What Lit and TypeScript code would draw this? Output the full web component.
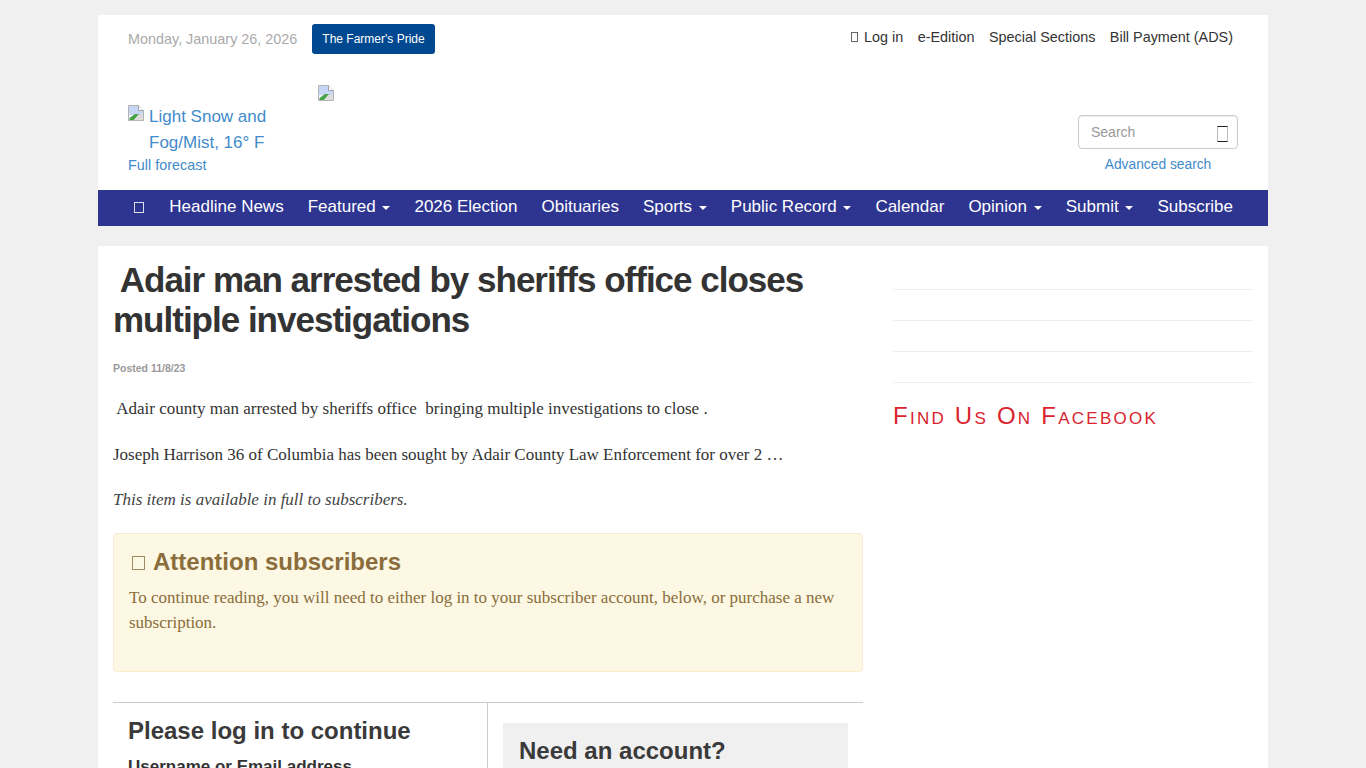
import { LitElement, html, css } from "lit";
import { customElement } from "lit/decorators.js";

const navItems = [
	{ label: "Headline News" },
	{ label: "Featured", caret: true },
	{ label: "2026 Election" },
	{ label: "Obituaries" },
	{ label: "Sports", caret: true },
	{ label: "Public Record", caret: true },
	{ label: "Calendar" },
	{ label: "Opinion", caret: true },
	{ label: "Submit", caret: true },
	{ label: "Subscribe" },
];

// chrome's broken image placeholder
const brokenImage = html`<svg class="broken" width="16" height="16" viewBox="0 0 16 16">
	<path d="M0.5 0.5H10.5L15.5 5.5V15.5H0.5Z" fill="#f4f4f4" stroke="#b4b4b4" />
	<path d="M1 1H10V6H15V10H1Z" fill="#c6d6f4" />
	<path d="M1.5 15V13L7 9H11L6 15Z" fill="#47a447" />
	<path d="M6 15L11 9.5H15V15Z" fill="#dcdcdc" />
	<path d="M10.5 0.5V5.5H15.5" fill="#fff" stroke="#a0a0a0" />
</svg>`;

@customElement("app-root")
export class AppRoot extends LitElement {
	static override styles = css`
		:host {
			display: block;
			height: 768px;
			overflow: hidden;
			background: #f0f0f0;
			font-family: "Liberation Sans", Arial, sans-serif;
			font-size: 14px;
			color: #333;
		}
		a {
			color: #428bca;
			text-decoration: none;
		}
		.page {
			width: 1170px;
			margin: 0 auto;
			padding-top: 15px;
		}
		.tofu {
			display: inline-block;
			box-sizing: border-box;
			border: 1px solid currentColor;
			width: 8px;
			height: 11px;
		}

		.header {
			background: #fff;
			height: 175px;
			display: flex;
			flex-direction: column;
		}
		.top {
			display: flex;
			justify-content: space-between;
			padding: 9px 35px 0 30px;
		}
		.top-left {
			display: flex;
			align-items: center;
			gap: 14.5px;
			height: 30px;
		}
		.date {
			color: #aaa;
			font-size: 14.4px;
		}
		.pride {
			background: #004990;
			color: #fff;
			font-size: 12px;
			line-height: 30px;
			padding: 0 10.5px;
			border-radius: 3px;
		}
		.top-links {
			display: flex;
			gap: 14.5px;
			padding-top: 3px;
			line-height: 20px;
			font-size: 14.4px;
		}
		.top-links a {
			color: #333;
		}
		.top-links .tofu {
			width: 7px;
			height: 10px;
			margin-right: 6px;
			color: #666;
		}
		.masthead {
			display: flex;
			padding: 31px 30px 0;
		}
		.weather {
			width: 190px;
			padding-top: 19px;
		}
		.weather-link {
			display: block;
			font-size: 17px;
			line-height: 26px;
			padding-left: 21px;
			width: 130px;
			position: relative;
		}
		.broken {
			display: block;
		}
		.weather-link .broken {
			position: absolute;
			left: 0;
			top: 1px;
		}
		.forecast {
			display: block;
			font-size: 14.4px;
			line-height: 20px;
			margin-top: -1px;
		}
		.logo {
			flex: 1;
		}
		.search-box {
			width: 160px;
			padding-top: 30px;
			text-align: center;
		}
		.search {
			box-sizing: border-box;
			height: 34px;
			border: 1px solid #ccc;
			border-radius: 4px;
			display: flex;
			align-items: center;
			justify-content: space-between;
			padding: 0 9px 0 12px;
			color: #999;
			box-shadow: inset 0 1px 1px rgba(0, 0, 0, 0.075);
		}
		.search .tofu {
			width: 11px;
			height: 16px;
			margin-top: 4px;
			border-color: #222 #bbb;
		}
		.advanced {
			display: block;
			margin-top: 6px;
			font-size: 13.8px;
			line-height: 20px;
		}

		.nav {
			background: #2e3591;
			height: 36px;
			display: flex;
			justify-content: flex-end;
			align-items: center;
			gap: 24px;
			padding: 0 35px 2px 0;
			box-sizing: border-box;
			color: #fff;
			font-size: 17px;
		}
		.nav .tofu {
			width: 10px;
			height: 11px;
			margin-right: 1px;
			color: #dde;
		}
		.caret {
			display: inline-block;
			width: 0;
			height: 0;
			margin-left: 2px;
			vertical-align: middle;
			border-top: 4px solid #fff;
			border-left: 4px solid transparent;
			border-right: 4px solid transparent;
		}

		.content {
			background: #fff;
			margin-top: 20px;
			display: flex;
			gap: 30px;
			padding: 0 15px;
			height: 600px;
		}
		.article {
			width: 750px;
			flex: none;
		}
		h1 {
			margin: 14px 0 0;
			font-size: 35px;
			line-height: 40px;
			letter-spacing: -1px;
			font-weight: bold;
			color: #333;
		}
		h1 .lead {
			letter-spacing: -3px;
		}
		.posted {
			margin-top: 21px;
			font-size: 10.5px;
			line-height: 14px;
			font-weight: bold;
			color: #999;
		}
		.body p {
			margin: 0 0 20px;
			font-family: "Liberation Serif", "Times New Roman", serif;
			font-size: 17px;
			line-height: 25.5px;
			color: #333;
		}
		.body p .lead {
			letter-spacing: -1px;
		}
		.body em {
			color: #444;
		}
		.body {
			margin-top: 21px;
		}
		.alert {
			box-sizing: border-box;
			height: 139px;
			background: #fcf8e3;
			border: 1px solid #faebcc;
			border-radius: 4px;
			padding: 15px;
			color: #8a6d3b;
		}
		.alert h3 {
			margin: 0 0 10px;
			font-size: 24px;
			line-height: 26px;
		}
		.alert .tofu {
			width: 13px;
			height: 14px;
			margin: 0 8px 0 3px;
			border-color: #a08a60;
		}
		.alert p {
			margin: 0;
			font-family: "Liberation Serif", "Times New Roman", serif;
			font-size: 17px;
			line-height: 25px;
		}
		.login {
			margin-top: 30px;
			border-top: 1px solid #ccc;
			display: flex;
		}
		.login-left {
			width: 375px;
			box-sizing: border-box;
			border-right: 1px solid #ccc;
			padding: 15px 15px 40px;
		}
		.login h3 {
			margin: 0;
			font-size: 24px;
			line-height: 26px;
			color: #3a3a3a;
		}
		.login label {
			display: block;
			margin-top: 13px;
			font-size: 17px;
			font-weight: bold;
			line-height: 20px;
		}
		.login-right {
			flex: 1;
			padding: 20px 15px 0;
		}
		.account {
			background: #f0f0f0;
			padding: 15px 16px;
			height: 100px;
		}

		.sidebar {
			flex: 1;
			padding-top: 43px;
		}
		.rule {
			border-top: 1px solid #eee;
			height: 30px;
		}
		.facebook {
			margin: -12px 0 0;
			font-size: 24px;
			line-height: 30px;
			font-weight: normal;
			font-variant: small-caps;
			letter-spacing: 2.25px;
			color: #d9232e;
		}
	`;

	override render() {
		return html`
			<div class="page">
				<div class="header">
					<div class="top">
						<div class="top-left">
							<span class="date">Monday, January 26, 2026</span>
							<a class="pride" href="#">The Farmer's Pride</a>
						</div>
						<div class="top-links">
							<a href="#"><span class="tofu"></span>Log in</a>
							<a href="#">e-Edition</a>
							<a href="#">Special Sections</a>
							<a href="#">Bill Payment (ADS)</a>
						</div>
					</div>
					<div class="masthead">
						<div class="weather">
							<a class="weather-link" href="#">${brokenImage}Light Snow and Fog/Mist, 16° F</a>
							<a class="forecast" href="#">Full forecast</a>
						</div>
						<div class="logo">${brokenImage}</div>
						<div class="search-box">
							<div class="search">Search<span class="tofu"></span></div>
							<a class="advanced" href="#">Advanced search</a>
						</div>
					</div>
				</div>
				<div class="nav">
					<span class="tofu"></span>
					${navItems.map(
						(item) => html`<span>${item.label}${item.caret ? html` <span class="caret"></span>` : ""}</span>`,
					)}
				</div>
				<div class="content">
					<div class="article">
						<h1><span class="lead">&nbsp;</span>Adair man arrested by sheriffs office closes multiple investigations</h1>
						<div class="posted">Posted 11/8/23</div>
						<div class="body">
							<p><span class="lead">&nbsp;</span>Adair county man arrested by sheriffs office&nbsp; bringing multiple investigations to close .</p>
							<p>Joseph Harrison 36 of Columbia has been sought by Adair County Law Enforcement for over 2 …</p>
							<p><em>This item is available in full to subscribers.</em></p>
						</div>
						<div class="alert">
							<h3><span class="tofu"></span>Attention subscribers</h3>
							<p>To continue reading, you will need to either log in to your subscriber account, below, or purchase a new subscription.</p>
						</div>
						<div class="login">
							<div class="login-left">
								<h3>Please log in to continue</h3>
								<label>Username or Email address</label>
							</div>
							<div class="login-right">
								<div class="account"><h3>Need an account?</h3></div>
							</div>
						</div>
					</div>
					<div class="sidebar">
						<div class="rule"></div>
						<div class="rule"></div>
						<div class="rule"></div>
						<div class="rule"></div>
						<h3 class="facebook">Find Us On Facebook</h3>
					</div>
				</div>
			</div>
		`;
	}
}
